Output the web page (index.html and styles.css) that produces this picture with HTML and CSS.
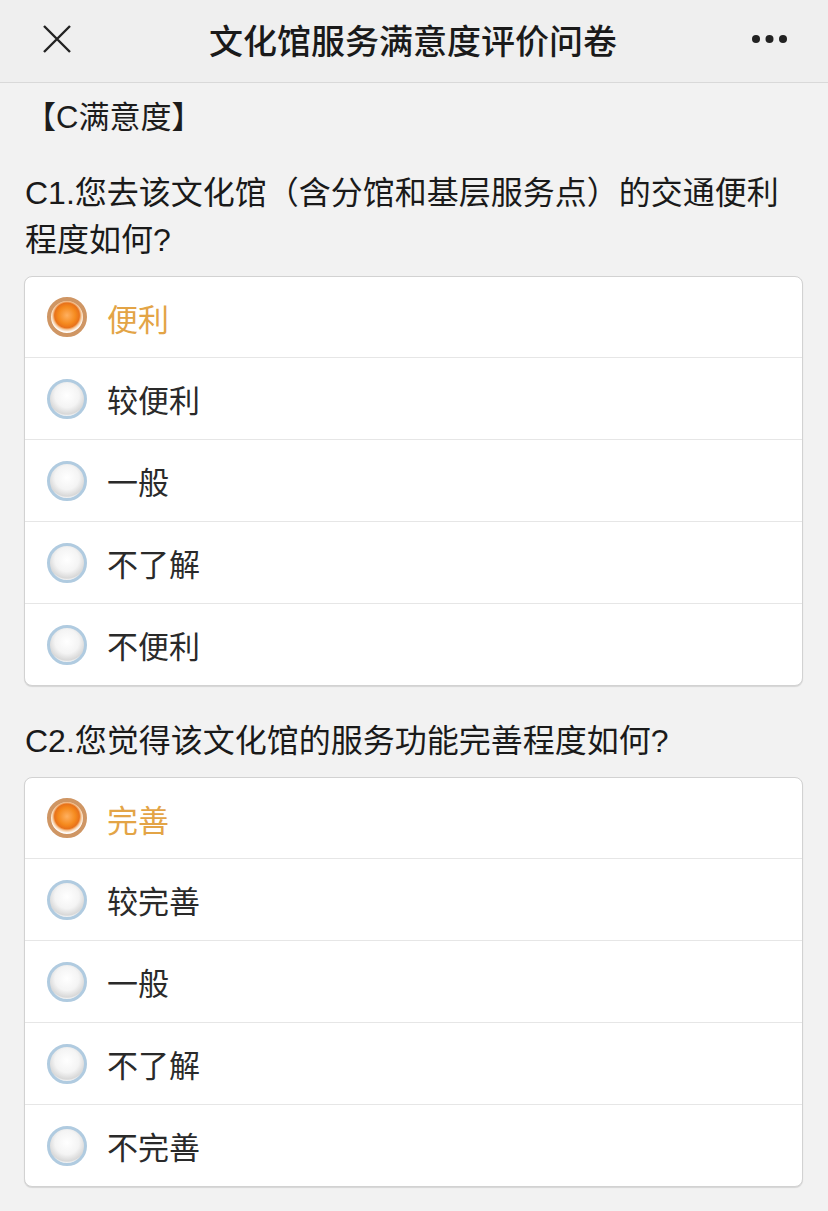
FILE: index.html
```html
<!DOCTYPE html>
<html lang="zh-CN">
<head>
  <meta charset="UTF-8" />
  <meta name="viewport" content="width=device-width, initial-scale=1.0"/>
  <title>文化馆服务满意度评价问卷</title>
  <link rel="stylesheet" href="styles.css">
</head>
<body>
  <div class="top-bar">
    <span class="close-btn">
      <svg width="30" height="30" viewBox="0 0 30 30">
        <path d="M2 2 L28 28 M28 2 L2 28" stroke="#222" stroke-width="2.4" fill="none"/>
      </svg>
    </span>
    <div class="top-title">文化馆服务满意度评价问卷</div>
    <span class="more-btn">
      <svg width="40" height="10" viewBox="0 0 40 10">
        <circle cx="6" cy="5" r="4" fill="#222"/>
        <circle cx="19.5" cy="5" r="4" fill="#222"/>
        <circle cx="33" cy="5" r="4" fill="#222"/>
      </svg>
    </span>
  </div>

  <div class="page">
    <div class="section-title">【C满意度】</div>

    <div class="question">C1.您去该文化馆（含分馆和基层服务点）的交通便利程度如何?</div>
    <div class="options">
      <label class="option checked"><span class="radio"></span>便利</label>
      <label class="option"><span class="radio"></span>较便利</label>
      <label class="option"><span class="radio"></span>一般</label>
      <label class="option"><span class="radio"></span>不了解</label>
      <label class="option"><span class="radio"></span>不便利</label>
    </div>

    <div class="question q2">C2.您觉得该文化馆的服务功能完善程度如何?</div>
    <div class="options">
      <label class="option checked"><span class="radio"></span>完善</label>
      <label class="option"><span class="radio"></span>较完善</label>
      <label class="option"><span class="radio"></span>一般</label>
      <label class="option"><span class="radio"></span>不了解</label>
      <label class="option"><span class="radio"></span>不完善</label>
    </div>
  </div>
</body>
</html>
```

FILE: styles.css
```css
html, body {
  margin: 0;
  padding: 0;
  background: #f2f2f2;
  font-family: "Liberation Sans", "Noto Sans CJK SC", sans-serif;
  color: #1c1c1c;
}

.top-bar {
  height: 82px;
  background: #efefef;
  border-bottom: 1px solid #d9d9d9;
  display: flex;
  align-items: center;
  justify-content: space-between;
  padding: 0 38px 0 42px;
}

.close-btn {
  display: flex;
  width: 30px;
  height: 30px;
  margin-top: -4px;
}

.top-title {
  font-size: 34px;
  font-weight: 500;
  color: #1a1a1a;
  margin-left: 4px;
  margin-top: -4px;
}

.more-btn {
  display: flex;
  margin-top: -4px;
}

.page {
  padding: 11px 25px 24px 24px;
}

.section-title {
  font-size: 31px;
  line-height: 47px;
  margin-left: 1px;
  color: #1c1c1c;
}

.question {
  font-size: 32px;
  line-height: 47px;
  margin: 29px 10px 12px 1px;
  color: #1a1a1a;
}

.question.q2 {
  margin-top: 32px;
}

.options {
  background: #fff;
  border: 1px solid #d2d2d2;
  border-radius: 8px;
  box-shadow: 0 1px 1px rgba(0, 0, 0, 0.12);
  overflow: hidden;
}

.option {
  display: flex;
  align-items: center;
  height: 81px;
  padding-left: 22px;
  font-size: 31px;
  color: #2a2a2a;
  border-top: 1px solid #e6e6e6;
}

.option:first-child {
  border-top: none;
  height: 80px;
}

.option.checked {
  color: #e3a446;
}

.radio {
  width: 40px;
  height: 40px;
  border-radius: 50%;
  margin-right: 20px;
  box-sizing: border-box;
  border: 3px solid #b0cbe0;
  background: radial-gradient(circle at 50% 40%, #ffffff 0%, #f4f4f4 45%, #d8d8d8 70%, #ffffff 78%, #e8eef4 100%);
}

.option.checked .radio {
  border: 4px solid #cf9664;
  background: radial-gradient(circle at 50% 45%, #ffb060 0%, #f58a1e 36%, #e8721a 52%, #f6c99c 60%, #ffffff 70%, #f3dcc6 100%);
}
```
